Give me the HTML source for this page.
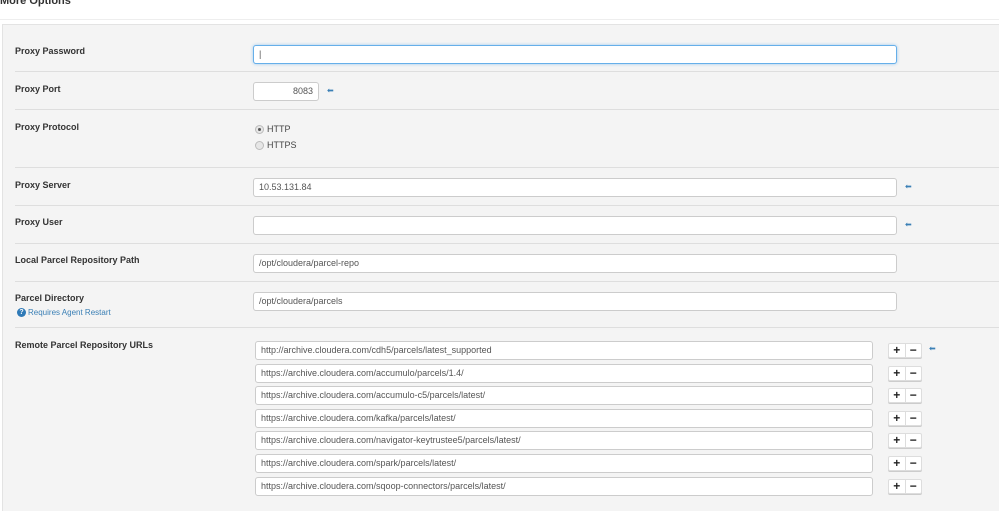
<!DOCTYPE html>
<html><head><style>
body{margin:0;width:999px;height:510px;background:#fff;font-family:"Liberation Sans",Arial,sans-serif;position:relative;overflow:hidden}
.a{position:absolute}
.panel{left:2px;top:24px;width:997px;height:486px;background:#f4f4f4;border-left:1px solid #e3e3e3;border-top:1px solid #e3e3e3}
.lbl{font-size:9px;font-weight:bold;color:#333;left:15px}
.sep{left:15px;width:984px;height:1px;background:#dedede}
.in{background:#fff;border:1px solid #ccc;border-radius:3px;box-sizing:border-box;font-size:9px;color:#555;padding:0 5px;line-height:17px;height:19px}
.arr{font-size:8px;color:#3a7fb5}
.btn{width:34px;height:15px;background:#fff;border:1px solid #ddd;border-radius:2px;box-sizing:border-box;display:flex;font-weight:bold;font-size:12px;line-height:13px;color:#222;box-shadow:0 1px 0 #ccc}
.btn span{flex:1;text-align:center}
.btn span+span{border-left:1px solid #ddd}
.rad{width:7px;height:7px;border:1px solid #bbb;border-radius:50%;background:#e6e6e6;left:255px}
</style></head><body>
<div class="a" style="left:0;top:-5px;font-size:11px;font-weight:bold;color:#333">More Options</div>
<div class="a" style="left:0;top:19px;width:999px;height:1px;background:#eee"></div>
<div class="a panel"></div>

<div class="a lbl" style="top:46px">Proxy Password</div>
<div class="a in" style="left:253px;top:45px;width:644px;border-color:#66afe9;box-shadow:0 0 3px #9cc8ee">|</div>
<div class="a sep" style="top:71px"></div>

<div class="a lbl" style="top:84px">Proxy Port</div>
<div class="a in" style="left:253px;top:82px;width:66px;text-align:right">8083</div>
<div class="a arr" style="left:327px;top:86px">&#11013;</div>
<div class="a sep" style="top:109px"></div>

<div class="a lbl" style="top:122px">Proxy Protocol</div>
<div class="a rad" style="top:125px"></div><div class="a" style="left:258px;top:128px;width:3px;height:3px;border-radius:50%;background:#555"></div>
<div class="a" style="left:267px;top:124px;font-size:9px;color:#444">HTTP</div>
<div class="a rad" style="top:141px"></div>
<div class="a" style="left:267px;top:140px;font-size:9px;color:#444">HTTPS</div>
<div class="a sep" style="top:167px"></div>

<div class="a lbl" style="top:180px">Proxy Server</div>
<div class="a in" style="left:253px;top:178px;width:644px">10.53.131.84</div>
<div class="a arr" style="left:905px;top:182px">&#11013;</div>
<div class="a sep" style="top:205px"></div>

<div class="a lbl" style="top:217px">Proxy User</div>
<div class="a in" style="left:253px;top:216px;width:644px"></div>
<div class="a arr" style="left:905px;top:220px">&#11013;</div>
<div class="a sep" style="top:243px"></div>

<div class="a lbl" style="top:255px">Local Parcel Repository Path</div>
<div class="a in" style="left:253px;top:254px;width:644px">/opt/cloudera/parcel-repo</div>
<div class="a sep" style="top:281px"></div>

<div class="a lbl" style="top:293px">Parcel Directory</div>
<div class="a" style="left:17px;top:308px;width:9px;height:9px;border-radius:50%;background:#2f7ab7;color:#fff;font-size:7px;font-weight:bold;text-align:center;line-height:9px">?</div>
<div class="a" style="left:28px;top:308px;font-size:8px;color:#3a7fb5">Requires Agent Restart</div>
<div class="a in" style="left:253px;top:292px;width:644px">/opt/cloudera/parcels</div>
<div class="a sep" style="top:327px"></div>

<div class="a lbl" style="top:340px">Remote Parcel Repository URLs</div>
<div class="a arr" style="left:929px;top:344px">&#11013;</div>

<div class="a in" style="left:255px;top:341px;width:618px">http://archive.cloudera.com/cdh5/parcels/latest_supported</div>
<div class="a btn" style="left:888px;top:343px"><span>+</span><span>−</span></div>
<div class="a in" style="left:255px;top:364px;width:618px">https://archive.cloudera.com/accumulo/parcels/1.4/</div>
<div class="a btn" style="left:888px;top:366px"><span>+</span><span>−</span></div>
<div class="a in" style="left:255px;top:386px;width:618px">https://archive.cloudera.com/accumulo-c5/parcels/latest/</div>
<div class="a btn" style="left:888px;top:388px"><span>+</span><span>−</span></div>
<div class="a in" style="left:255px;top:409px;width:618px">https://archive.cloudera.com/kafka/parcels/latest/</div>
<div class="a btn" style="left:888px;top:411px"><span>+</span><span>−</span></div>
<div class="a in" style="left:255px;top:431px;width:618px">https://archive.cloudera.com/navigator-keytrustee5/parcels/latest/</div>
<div class="a btn" style="left:888px;top:433px"><span>+</span><span>−</span></div>
<div class="a in" style="left:255px;top:454px;width:618px">https://archive.cloudera.com/spark/parcels/latest/</div>
<div class="a btn" style="left:888px;top:456px"><span>+</span><span>−</span></div>
<div class="a in" style="left:255px;top:477px;width:618px">https://archive.cloudera.com/sqoop-connectors/parcels/latest/</div>
<div class="a btn" style="left:888px;top:479px"><span>+</span><span>−</span></div>
</body></html>
